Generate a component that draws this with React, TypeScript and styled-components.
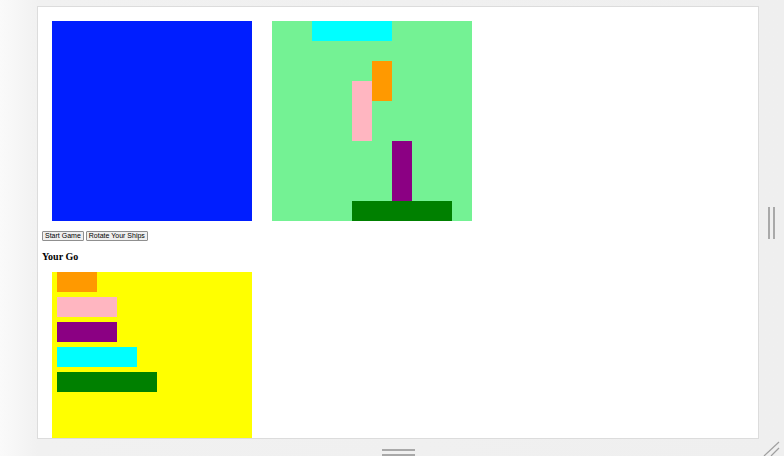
import React from "react";
import styled, { createGlobalStyle } from "styled-components";

const Global = createGlobalStyle`
  html, body { margin: 0; padding: 0; width: 784px; height: 456px; overflow: hidden; }
  body { background: linear-gradient(90deg, #fafafa 0px, #f1f1f1 38px, #efefef 100%); font-family: "Liberation Serif", serif; }
`;

const Stage = styled.div`
  display: grid;
  grid-template-columns: 37px 722px 1fr;
  grid-template-rows: 6px 433px 1fr;
  width: 784px;
  height: 456px;
`;

const Frame = styled.div`
  grid-column: 2;
  grid-row: 2;
  background: #fff;
  border: 1px solid #dcdcdc;
  overflow: hidden;
  box-sizing: border-box;
`;

const Content = styled.div`
  padding: 14px 4px 0 4px;
`;

const Boards = styled.div`
  display: flex;
  gap: 20px;
  margin-left: 10px;
`;

const Grid = styled.div<{ $bg: string }>`
  position: relative;
  width: 200px;
  height: 200px;
  background: ${(p) => p.$bg};
`;

const Cell = styled.div<{ $c: string }>`
  position: absolute;
  background: ${(p) => p.$c};
`;

const Controls = styled.div`
  display: flex;
  gap: 2px;
  margin-top: 10px;
`;

const Button = styled.button`
  height: 10px;
  padding: 0 2px;
  margin: 0;
  font-family: "Liberation Sans", Arial, sans-serif;
  font-size: 7px;
  line-height: 8px;
  color: #000;
  background: #efefef;
  border: 1px solid #8f8f8f;
  border-radius: 1px;
  box-sizing: border-box;
`;

const Turn = styled.div`
  margin-top: 10px;
  font-family: "Liberation Serif", serif;
  font-weight: bold;
  font-size: 10px;
  line-height: 12px;
  height: 12px;
`;

const Dock = styled.div`
  margin: 9px 0 0 10px;
  width: 200px;
  height: 260px;
  background: #ffff00;
  display: flex;
  flex-direction: column;
  gap: 5px;
`;

const DockShip = styled.div<{ $c: string; $w: number }>`
  margin-left: 5px;
  height: 20px;
  width: ${(p) => p.$w}px;
  background: ${(p) => p.$c};
`;

const SideGutter = styled.div`
  grid-column: 3;
  grid-row: 2;
  display: flex;
  align-items: center;
  justify-content: flex-start;
  padding-left: 9px;
  gap: 3px;
`;

const VBar = styled.div`
  width: 2px;
  height: 32px;
  background: #a9a9a9;
`;

const BottomGutter = styled.div`
  grid-column: 2;
  grid-row: 3;
  display: flex;
  flex-direction: column;
  align-items: center;
  padding-top: 10px;
  gap: 3px;
`;

const HBar = styled.div`
  width: 33px;
  height: 2px;
  background: #a9a9a9;
`;

const Corner = styled.div`
  grid-column: 3;
  grid-row: 3;
  position: relative;
`;

const ships = [
  { c: "#00ffff", x: 2, y: 0, w: 4, h: 1 },
  { c: "#ff9900", x: 5, y: 2, w: 1, h: 2 },
  { c: "#ffb6c1", x: 4, y: 3, w: 1, h: 3 },
  { c: "#8b0083", x: 6, y: 6, w: 1, h: 3 },
  { c: "#008000", x: 4, y: 9, w: 5, h: 1 },
];

const dock = [
  { c: "#ff9900", w: 40 },
  { c: "#ffb6c1", w: 60 },
  { c: "#8b0083", w: 60 },
  { c: "#00ffff", w: 80 },
  { c: "#008000", w: 100 },
];

export default function App() {
  return (
    <>
      <Global />
      <Stage>
        <Frame>
          <Content>
            <Boards>
              <Grid $bg="#001eff" />
              <Grid $bg="#74f294">
                {ships.map((s, i) => (
                  <Cell
                    key={i}
                    $c={s.c}
                    style={{ left: s.x * 20, top: s.y * 20, width: s.w * 20, height: s.h * 20 }}
                  />
                ))}
              </Grid>
            </Boards>
            <Controls>
              <Button>Start Game</Button>
              <Button>Rotate Your Ships</Button>
            </Controls>
            <Turn>Your Go</Turn>
            <Dock>
              {dock.map((d, i) => (
                <DockShip key={i} $c={d.c} $w={d.w} />
              ))}
            </Dock>
          </Content>
        </Frame>
        <SideGutter>
          <VBar />
          <VBar />
        </SideGutter>
        <BottomGutter>
          <HBar />
          <HBar />
        </BottomGutter>
        <Corner>
          <svg width="25" height="17" viewBox="0 0 25 17" style={{ position: "absolute", left: 0, top: 0 }}>
            <line x1="5" y1="17" x2="20" y2="3" stroke="#a0a0a0" strokeWidth="1.2" />
            <line x1="12" y1="17" x2="20" y2="9" stroke="#a0a0a0" strokeWidth="1.2" />
          </svg>
        </Corner>
      </Stage>
    </>
  );
}
